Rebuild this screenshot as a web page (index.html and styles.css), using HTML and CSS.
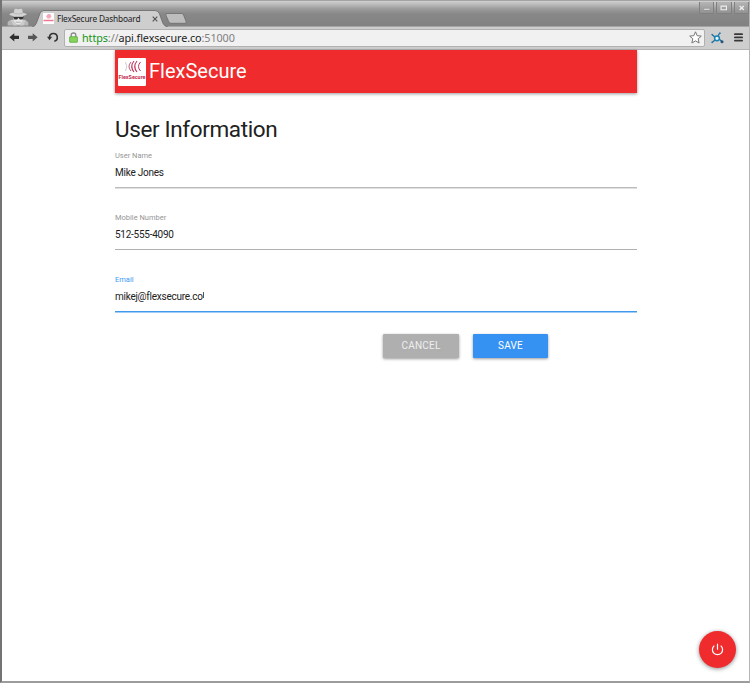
FILE: index.html
```html
<!DOCTYPE html>
<html lang="en">
<head>
<meta charset="utf-8">
<title>FlexSecure Dashboard</title>
<link rel="stylesheet" href="styles.css">
</head>
<body>
<div class="window">
  <div class="titlebar">
    <svg class="incognito" width="22" height="18" viewBox="0 0 24 20">
      <path d="M.5 19.500V15.500Q2 13.500 5.500 13L18.500 13Q22 13.500 23.500 16V19.500z" fill="#b8b8b8"/>
      <path d="M7 8H17.500V13Q16.500 18 12.300 18.500Q8 18 7 13z" fill="#e6e6e6"/>
      <path d="M4 13L7 13.500L11 19.500H7zM20.500 13L17.500 13.500L13.500 19.500H18z" fill="#ccc"/>
      <path d="M8.200 1.200Q10 .4 12.200 1.400Q14.500 .2 16.500 1.200L17.400 5.400Q22 6.200 21.500 7.500Q18.500 9.200 12.300 9.200Q5.500 9.200 2.500 7.500Q2.300 6.100 7.300 5.400z" fill="#d2d2d2"/>
      <path d="M7.200 5.700Q12.500 7.600 17.400 5.700" fill="none" stroke="#b5b5b5"/>
      <path d="M6.500 9.800H18.500L17 12.800H14L12.500 10.900L11 12.800H8z" fill="#303532"/>
      <path d="M9.500 15.800H15" stroke="#999" stroke-width=".8"/>
    </svg>
    <div class="tab">
      <svg class="tab-shape" width="136" height="17" viewBox="0 0 136 17">
        <path d="M0 17Q3 16.500 4.300 13.500L8 3.500Q9 .5 12 .5H123Q126 .5 127.300 3.500L131 13.500Q132.500 16.500 136 17z" fill="#cecece"/>
        <path d="M0 17Q3 16.500 4.300 13.500L8 3.500Q9 .5 12 .5H123Q126 .5 127.300 3.500L131 13.500Q132.500 16.500 136 17" fill="none" stroke="#686868" stroke-width=".8"/>
      </svg>
      <svg class="favicon" width="11" height="11" viewBox="0 0 11 11">
        <path d="M0 0h11v11H0z" fill="#fff"/>
        <path d="M3 3.200L5 1H7L8.500 3.200L7 5.500H4.500z" fill="#f3a9ba"/>
        <path d="M.5 7.500H10.500" stroke="#ee7791" stroke-width="1.500"/>
      </svg>
      <span class="tab-title">FlexSecure Dashboard</span>
      <svg class="tab-close" width="6" height="6" viewBox="0 0 6 6"><path d="M.7.7L5.300 5.300M5.300.7L.7 5.300" stroke="#555" stroke-width="1.200"/></svg>
    </div>
    <svg class="new-tab" width="22" height="11" viewBox="0 0 22 11"><path d="M2 .5H16.500Q18 .5 18.600 2L21.200 8.800Q21.500 10.300 20 10.300H6Q4.500 10.300 3.800 8.800L.8 2Q.4.5 2 .5z" fill="#bdbdbd" stroke="#6c6c6c" stroke-width=".8"/></svg>
    <div class="controls">
      <svg class="control" viewBox="0 0 15 12"><path d="M4 7h7v1.700H4z" fill="#eee" stroke="#777" stroke-width=".4"/></svg>
      <svg class="control" viewBox="0 0 15 12"><path d="M4.500 4.500h6v4h-6z" fill="none" stroke="#eee" stroke-width="1.200"/></svg>
      <svg class="control" viewBox="0 0 15 12"><path d="M5.200 4.200l4.600 4.600M9.800 4.200L5.200 8.800" stroke="#f0f0f0" stroke-width="1.500"/></svg>
    </div>
  </div>
  <div class="toolbar">
    <svg class="arrow" width="11" height="9" viewBox="0 0 11 9"><path d="M.4 4.300L5.300.2V2.800H10V6H5.300V8.600z" fill="#2d2d2d"/></svg>
    <svg class="arrow forward" width="11" height="9" viewBox="0 0 11 9"><path d="M9.600 4.300L4.700.2V2.800H0V6H4.700V8.600z" fill="#555"/></svg>
    <svg class="reload" width="12" height="11" viewBox="0 0 12 11"><path d="M2.500 6V5.200A3.900 3.900 0 1 1 7.300 9.200" fill="none" stroke="#333" stroke-width="1.600"/><path d="M0 4.800H5.200L2.500 8.200z" fill="#333"/></svg>
    <div class="address">
      <svg width="9" height="11" viewBox="0 0 9 11"><path d="M2.200 5V3Q2.200 1 4.500 1T6.800 3V5" fill="none" stroke="#888" stroke-width="1.300"/><rect x=".6" y="4.700" width="7.800" height="5.600" rx=".5" fill="#85d35b" stroke="#50a334" stroke-width=".7"/></svg>
      <span class="url"><span class="scheme">https</span><span class="dim">://</span>api.flexsecure.co<span class="dim">:51000</span></span>
      <svg class="star" width="13" height="13" viewBox="0 0 13 13"><path d="M6.500.8L8.200 4.700L12.300 5.100L9.200 7.800L10.100 12L6.500 9.900L2.900 12L3.800 7.800L.7 5.100L4.800 4.700z" fill="#fff" stroke="#777" stroke-linejoin="round"/></svg>
    </div>
    <svg class="extension" width="13" height="12" viewBox="0 0 13 12"><path d="M1 2.500L3.800 5M1 10.500L4 8M7 4L8.700 1M8 7L11 9.500" stroke="#23668e" stroke-width="1.200"/><circle cx="6" cy="6.300" r="2.400" fill="#eef5f8" stroke="#1784b9" stroke-width="1.500"/><circle cx="8.900" cy="1.200" r=".9" fill="#277caa"/><circle cx="11" cy="9.700" r="1.500" fill="#24577b"/><circle cx="1.100" cy="2.500" r=".8" fill="#277caa"/><circle cx="1.200" cy="10.300" r=".9" fill="#277caa"/></svg>
    <svg class="menu" width="9" height="9" viewBox="0 0 9 9"><path d="M.9 1.200h7.200M.9 4.400h7.200M.9 7.600h7.200" stroke="#383838" stroke-width="1.800" stroke-linecap="round"/></svg>
  </div>
  <main class="page">
    <header class="brand">
      <div class="logo">
        <svg width="28" height="15" viewBox="0 0 28 15" fill="none" stroke="#c0345c"><path d="M7.500 4Q10 8.500 7.500 13" stroke="#ccb9be" stroke-width=".8"/><path d="M13 4Q9 8.500 13 13" stroke="#b7536f"/><path d="M16 3Q11.500 8.500 16 14M19 3Q14.500 8.500 19 14" stroke-width="1.100"/><path d="M22.500 4Q18.500 8.500 22.500 13"/></svg>
        <span class="logo-name">FlexSecure</span>
      </div>
      <span class="brand-name">FlexSecure</span>
    </header>
    <h1>User Information</h1>
    <form class="form">
      <div class="field soft"><span class="label">User Name</span><span class="value">Mike Jones</span></div>
      <div class="field"><span class="label">Mobile Number</span><span class="value">512-555-4090</span></div>
      <div class="field focused"><span class="label">Email</span><span class="value">mikej@flexsecure.co<i class="caret"></i></span></div>
      <div class="actions">
        <button type="button" class="btn cancel">CANCEL</button>
        <button type="button" class="btn save">SAVE</button>
      </div>
    </form>
  </main>
  <button type="button" class="power" aria-label="Log out">
    <svg width="13" height="13" viewBox="0 0 13 13" fill="none" stroke="#fff" stroke-width="1.200"><path d="M6.500.7V6.800M3.300 2.600A5.100 5.100 0 1 0 9.700 2.600"/></svg>
  </button>
</div>
</body>
</html>
```
FILE: styles.css
```css
* { box-sizing: border-box; }
body { margin: 0; font-family: Roboto, sans-serif; }
.window {
  position: relative;
  display: flex;
  flex-direction: column;
  width: 750px;
  height: 683px;
  overflow: hidden;
  background: #fff;
  border-left: 2px solid #737373;
  border-right: 1px solid #b5b5b5;
  border-bottom: 2px solid #9c9c9c;
}
.titlebar {
  display: flex;
  align-items: flex-end;
  flex: none;
  height: 27px;
  margin-left: -2px;
  padding-left: 7px;
  background: linear-gradient(#777 0, #d0d0d0 1px, #b7b7b7 5px, #9b9b9b 9px, #888 14px, #828282 26px);
  border-bottom: 1px solid #a4a4a4;
}
.incognito { flex: none; margin-bottom: 0; }
.tab {
  position: relative;
  display: flex;
  align-items: center;
  width: 136px;
  height: 17px;
  margin: 0 0 -1px 3px;
  padding-left: 11px;
}
.tab-shape { position: absolute; left: 0; top: 0; }
.favicon { position: relative; }
.tab-title {
  position: relative;
  margin-left: 3px;
  width: 95px;
  font: 8.300px/16px "Noto Sans", sans-serif;
  letter-spacing: -.17px;
  color: #222;
  white-space: nowrap;
}
.tab-close { position: relative; }
.new-tab { margin: 0 0 2px -3px; }
.controls { display: flex; gap: 2px; align-self: flex-start; margin: 2px 0 0 auto; }
.control {
  width: 15.500px;
  height: 12px;
  border: 1px solid #808080;
  border-top: 0;
  border-radius: 0 0 2px 2px;
  background: linear-gradient(#b5b5b5, #929292);
}
.toolbar {
  display: flex;
  align-items: center;
  flex: none;
  height: 23px;
  padding: 0 6px 1px 7px;
  background: #cecece;
  border-bottom: 1px solid #b3b3b3;
}
.forward { margin-left: 8px; }
.reload { margin-left: 8px; }
.address {
  display: flex;
  align-items: center;
  width: 641px;
  height: 18px;
  margin-left: 5px;
  padding: 0 2px 0 4px;
  background: #f1f1f1;
  border: 1px solid #b0b0b0;
  border-radius: 2px;
}
.url { margin-left: 4px; font: 10.800px/16px "Noto Sans", sans-serif; letter-spacing: -.09px; color: #222; white-space: nowrap; }
.scheme { color: #159415; }
.dim { color: #808080; }
.star { margin-left: auto; }
.extension { margin-left: 6px; }
.menu { margin-left: auto; }
.page { width: 522px; margin-left: 113px; }
.brand {
  display: flex;
  align-items: center;
  height: 42.600px;
  padding-left: 3px;
  background: #ef2b2d;
  color: #fff;
  box-shadow: 0 1px 3px rgba(0, 0, 0, .4);
}
.logo {
  width: 28px;
  height: 28px;
  margin-top: 2px;
  background: #fff;
  border-radius: 1px;
  overflow: hidden;
}
.logo svg { display: block; }
.logo-name {
  display: block;
  font: bold 5.400px/9px Roboto, sans-serif;
  text-align: center;
  white-space: nowrap;
  color: #c42c50;
}
.brand-name { margin-left: 3px; font-size: 20px; line-height: 28px; }
h1 { margin: 22.400px 0 0; font-size: 22.500px; line-height: 28px; font-weight: 400; letter-spacing: -.37px; color: #212121; white-space: nowrap; }
.form { display: flex; flex-direction: column; }
.field {
  display: flex;
  flex-direction: column;
  height: 37px;
  margin: 8px 0 17px;
  border-bottom: 1px solid #b0b0b0;
}
.soft { border-bottom-color: #c9c9c9; box-shadow: 0 1px #e0e0e0; border-bottom-color: #bbb; }
.label { font-size: 7.500px; line-height: 10px; color: #969696; }
.value { margin-top: 5px; font-size: 10px; line-height: 14px; letter-spacing: -.25px; color: #212121; }
.focused { border-bottom-color: #4099ec; box-shadow: 0 1px #a0cdf8; }
.focused .label { color: #3d9bf4; }
.caret { display: inline-block; width: 1px; height: 6px; background: #555; vertical-align: 2px; }
.actions { display: flex; gap: 14px; margin: 5px 0 0 268px; }
.btn {
  width: 75px;
  height: 24px;
  padding: 0;
  border: 0;
  border-radius: 1px;
  font: 10px/23px Roboto, sans-serif;
  letter-spacing: .25px;
  color: #fff;
  box-shadow: 0 1px 3px rgba(0, 0, 0, .4);
}
.cancel { width: 76px; background: #afafaf; color: #eee; }
.save { background: #3592f3; }
.power {
  position: absolute;
  right: 13px;
  bottom: 13px;
  display: flex;
  align-items: center;
  justify-content: center;
  width: 37px;
  height: 37px;
  padding: 0;
  border: 0;
  border-radius: 50%;
  background: #ef2b2d;
  box-shadow: 0 1px 4px rgba(0, 0, 0, .45);
}
```
